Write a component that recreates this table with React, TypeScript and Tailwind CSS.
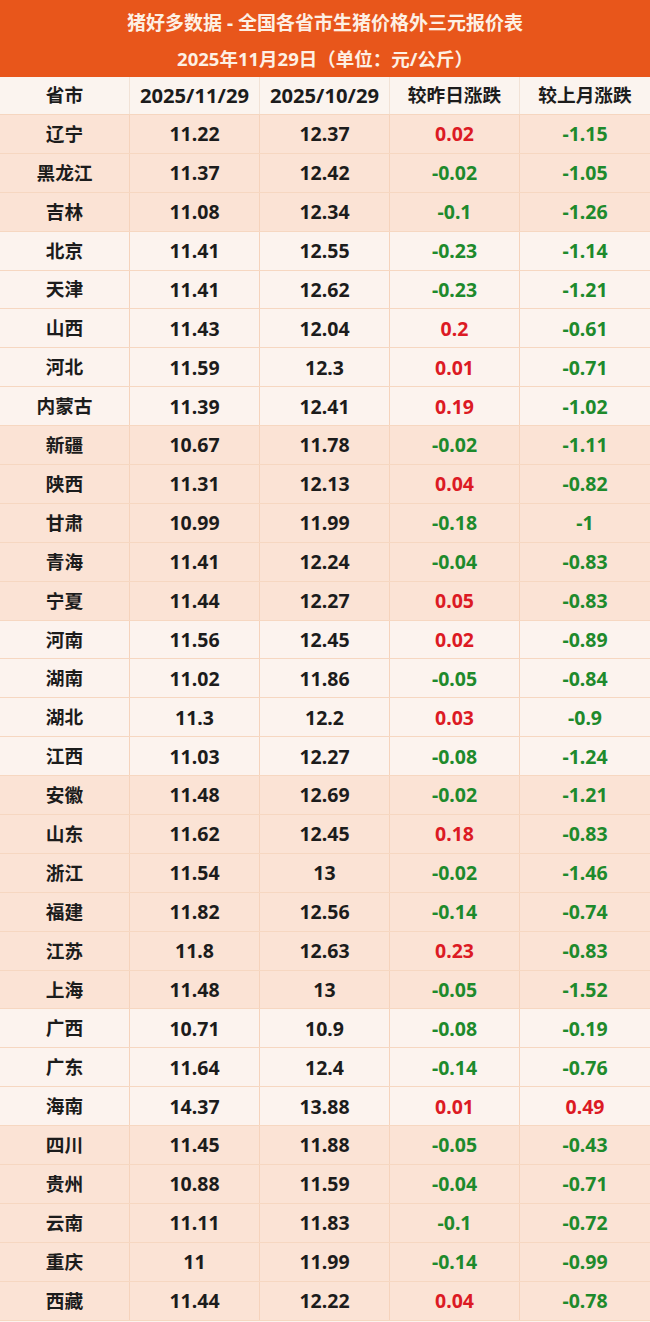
import React from "react";

type Row = [string, string, string, string, string, boolean];

const rows: Row[] = [
  ["辽宁", "11.22", "12.37", "0.02", "-1.15", true],
  ["黑龙江", "11.37", "12.42", "-0.02", "-1.05", true],
  ["吉林", "11.08", "12.34", "-0.1", "-1.26", true],
  ["北京", "11.41", "12.55", "-0.23", "-1.14", false],
  ["天津", "11.41", "12.62", "-0.23", "-1.21", false],
  ["山西", "11.43", "12.04", "0.2", "-0.61", false],
  ["河北", "11.59", "12.3", "0.01", "-0.71", false],
  ["内蒙古", "11.39", "12.41", "0.19", "-1.02", false],
  ["新疆", "10.67", "11.78", "-0.02", "-1.11", true],
  ["陕西", "11.31", "12.13", "0.04", "-0.82", true],
  ["甘肃", "10.99", "11.99", "-0.18", "-1", true],
  ["青海", "11.41", "12.24", "-0.04", "-0.83", true],
  ["宁夏", "11.44", "12.27", "0.05", "-0.83", true],
  ["河南", "11.56", "12.45", "0.02", "-0.89", false],
  ["湖南", "11.02", "11.86", "-0.05", "-0.84", false],
  ["湖北", "11.3", "12.2", "0.03", "-0.9", false],
  ["江西", "11.03", "12.27", "-0.08", "-1.24", false],
  ["安徽", "11.48", "12.69", "-0.02", "-1.21", true],
  ["山东", "11.62", "12.45", "0.18", "-0.83", true],
  ["浙江", "11.54", "13", "-0.02", "-1.46", true],
  ["福建", "11.82", "12.56", "-0.14", "-0.74", true],
  ["江苏", "11.8", "12.63", "0.23", "-0.83", true],
  ["上海", "11.48", "13", "-0.05", "-1.52", true],
  ["广西", "10.71", "10.9", "-0.08", "-0.19", false],
  ["广东", "11.64", "12.4", "-0.14", "-0.76", false],
  ["海南", "14.37", "13.88", "0.01", "0.49", false],
  ["四川", "11.45", "11.88", "-0.05", "-0.43", true],
  ["贵州", "10.88", "11.59", "-0.04", "-0.71", true],
  ["云南", "11.11", "11.83", "-0.1", "-0.72", true],
  ["重庆", "11", "11.99", "-0.14", "-0.99", true],
  ["西藏", "11.44", "12.22", "0.04", "-0.78", true],
];

const font = {
  fontFamily: '"Noto Sans", "Noto Sans CJK SC", sans-serif',
};

function Change({ v }: { v: string }) {
  const neg = v.startsWith("-");
  return (
    <span className={neg ? "text-[#1e8a2c]" : "text-[#dc1a24]"}>{v}</span>
  );
}

const cellR =
  "flex items-center justify-center border-r border-[#f5d3bc]";
const cell = "flex items-center justify-center";

export default function App() {
  return (
    <div
      className="w-[650px] h-[1322px] bg-[#fcf3ee] font-bold text-[#1c1c1c] overflow-hidden"
      style={font}
    >
      <div className="h-[77px] bg-[#e8561b] flex flex-col items-center pt-[6px] text-[#fdf0e4] leading-[35px]">
        <div className="text-[19px]">
          猪好多数据&nbsp;-&nbsp;全国各省市生猪价格外三元报价表
        </div>
        <div className="text-[18.5px]">2025年11月29日（单位：元/公斤）</div>
      </div>
      <div className="grid grid-cols-5 h-[38px] bg-[#fbf4ef] border-b border-[#f5d6c0]">
        <div className="flex items-center justify-center border-r border-[#f1e2d6] text-[18.7px]">
          省市
        </div>
        <div className="flex items-center justify-center border-r border-[#f1e2d6] text-[20.2px]">
          2025/11/29
        </div>
        <div className="flex items-center justify-center border-r border-[#f1e2d6] text-[20.2px]">
          2025/10/29
        </div>
        <div className="flex items-center justify-center border-r border-[#f1e2d6] text-[18.7px]">
          较昨日涨跌
        </div>
        <div className="flex items-center justify-center text-[18.7px]">
          较上月涨跌
        </div>
      </div>
      {rows.map(([name, a, b, c, d, pink]) => (
        <div
          key={name}
          className={`grid grid-cols-5 h-[38.9px] border-b border-[#f6d7c1] text-[19.5px] ${
            pink ? "bg-[#fbe3d5]" : "bg-[#fcf3ee]"
          }`}
        >
          <div className={`${cellR} text-[18.7px]`}>{name}</div>
          <div className={cellR}>{a}</div>
          <div className={cellR}>{b}</div>
          <div className={cellR}>
            <Change v={c} />
          </div>
          <div className={cell}>
            <Change v={d} />
          </div>
        </div>
      ))}
    </div>
  );
}
